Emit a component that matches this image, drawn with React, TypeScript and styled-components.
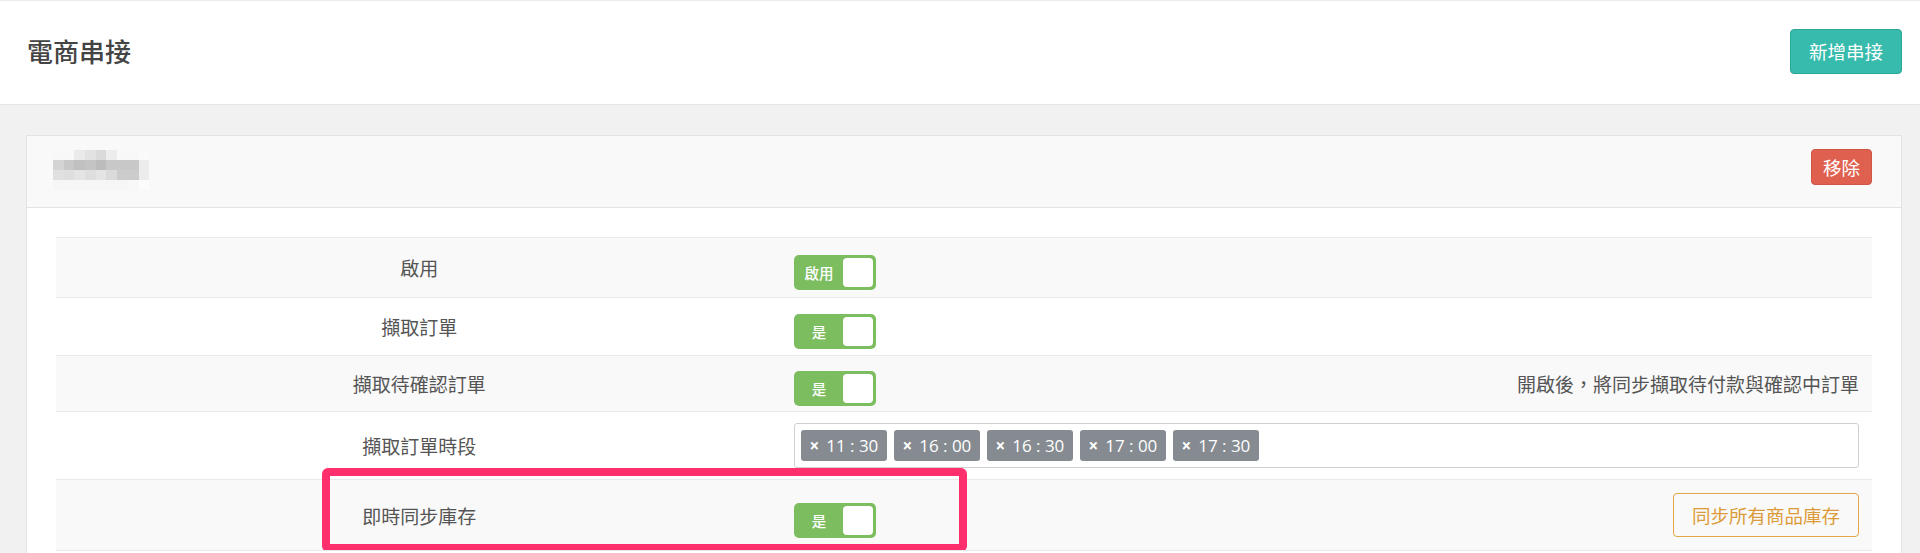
import styled, { createGlobalStyle } from 'styled-components';

const GlobalStyle = createGlobalStyle`
  html, body {
    margin: 0;
    padding: 0;
    background: #f1f1f1;
    font-family: "Noto Sans CJK TC", "Noto Sans", sans-serif;
    color: #555;
  }
  * { box-sizing: border-box; }
`;

const Page = styled.div`
  width: 1920px;
  height: 553px;
  overflow: hidden;
  background: #f1f1f1;
`;

const TopBar = styled.header`
  height: 105px;
  background: #fff;
  border-top: 1px solid #ebebeb;
  border-bottom: 1px solid #e6e6e6;
  display: flex;
  align-items: center;
  justify-content: space-between;
  padding: 0 18px 0 27px;
`;

const Title = styled.h1`
  margin: 0 0 3px;
  font-size: 26px;
  font-weight: 500;
  color: #444;
  line-height: 1;
`;

const Button = styled.button<{ $tone: 'teal' | 'red' | 'outline' }>`
  font-family: "Noto Sans CJK TC", sans-serif;
  font-size: 18.5px;
  line-height: 1;
  border-radius: 4px;
  cursor: pointer;
  ${({ $tone }) =>
    $tone === 'teal'
      ? `background:#36bbad;border:1px solid #2ea597;color:#fff;height:45px;padding:0 18px;margin-bottom:3px;`
      : $tone === 'red'
      ? `background:#e0604f;border:1px solid #cf5544;color:#fff;height:36px;padding:0 11px;`
      : `background:transparent;border:1px solid #e4a646;color:#dc9b38;height:44px;padding:0 18px;`}
`;

const Main = styled.main`
  padding: 30px 18px 0 26px;
`;

const Card = styled.section`
  background: #fff;
  border: 1px solid #e3e3e3;
  border-bottom: none;
`;

const CardHead = styled.div`
  height: 72px;
  background: #f9f9f9;
  border-bottom: 1px solid #e3e3e3;
  display: flex;
  align-items: flex-start;
  justify-content: space-between;
  padding: 13px 29px 0 26px;
`;

const Mosaic = styled.div`
  display: grid;
  grid-template-columns: repeat(9, 10.7px);
  grid-auto-rows: 10px;
  margin-top: 1px;
`;

const Pixel = styled.span<{ $g: number }>`
  background: ${({ $g }) => `rgb(${$g},${$g},${$g})`};
`;

const CardBody = styled.div`
  padding: 29px 29px 0;
`;

const Table = styled.div`
  display: flex;
  flex-direction: column;
`;

const Row = styled.div<{ $h: number; $odd: boolean }>`
  position: relative;
  height: ${({ $h }) => $h}px;
  display: grid;
  grid-template-columns: 40% 60%;
  border-top: 1px solid #e9e9e9;
  background: ${({ $odd }) => ($odd ? '#f9f9f9' : '#fff')};
`;

const LabelCell = styled.div`
  display: flex;
  align-items: center;
  justify-content: center;
  font-size: 19px;
  color: #555;
`;

const ValueCell = styled.div`
  display: flex;
  align-items: center;
  justify-content: space-between;
  padding: 0 13px 0 12px;
`;

const Note = styled.span`
  font-size: 19px;
  color: #555;
`;

const Switch = styled.div`
  width: 82px;
  height: 35px;
  margin-top: 10px;
  background: #7cbd5f;
  border-radius: 5px;
  display: flex;
  align-items: center;
  padding: 3px 3px 3px 0;
`;

const SwitchText = styled.span`
  flex: 1;
  text-align: center;
  color: #fff;
  font-size: 14.5px;
  font-weight: 500;
`;

const Knob = styled.span`
  width: 30px;
  height: 29px;
  background: #fff;
  border-radius: 4px;
`;

const TagBox = styled.div`
  flex: 1;
  height: 45px;
  border: 1px solid #cfcfcf;
  border-radius: 3px;
  background: #fff;
  display: flex;
  align-items: center;
  gap: 7px;
  padding: 0 6px;
`;

const Tag = styled.span`
  height: 31px;
  width: 86px;
  background: #858b91;
  color: #fff;
  border-radius: 3px;
  display: flex;
  align-items: center;
  justify-content: center;
  gap: 7px;
  font-family: "Open Sans", "Noto Sans", sans-serif;
  font-size: 17px;
  padding-right: 1px;
`;

const TagX = styled.span`
  font-weight: 700;
  font-size: 17px;
`;

const Highlight = styled.div`
  position: absolute;
  left: 266px;
  top: -12px;
  width: 645px;
  height: 84px;
  border: 8px solid #ff2e6c;
  border-radius: 6px;
  pointer-events: none;
`;

const mosaic = [
  [248, 248, 234, 226, 218, 236, 248, 248, 250],
  [212, 200, 192, 196, 188, 200, 200, 200, 236],
  [224, 222, 228, 222, 228, 218, 204, 204, 236],
  [246, 246, 246, 246, 246, 246, 246, 248, 252],
];

const times = ['11 : 30', '16 : 00', '16 : 30', '17 : 00', '17 : 30'];

const Toggle = ({ text }: { text: string }) => (
  <Switch>
    <SwitchText>{text}</SwitchText>
    <Knob />
  </Switch>
);

export default function App() {
  return (
    <Page>
      <GlobalStyle />
      <TopBar>
        <Title>電商串接</Title>
        <Button $tone="teal">新增串接</Button>
      </TopBar>
      <Main>
        <Card>
          <CardHead>
            <Mosaic>
              {mosaic.flat().map((g, i) => (
                <Pixel key={i} $g={g} />
              ))}
            </Mosaic>
            <Button $tone="red">移除</Button>
          </CardHead>
          <CardBody>
            <Table>
              <Row $h={60} $odd>
                <LabelCell>啟用</LabelCell>
                <ValueCell>
                  <Toggle text="啟用" />
                </ValueCell>
              </Row>
              <Row $h={58} $odd={false}>
                <LabelCell>擷取訂單</LabelCell>
                <ValueCell>
                  <Toggle text="是" />
                </ValueCell>
              </Row>
              <Row $h={56} $odd>
                <LabelCell>擷取待確認訂單</LabelCell>
                <ValueCell>
                  <Toggle text="是" />
                  <Note>開啟後，將同步擷取待付款與確認中訂單</Note>
                </ValueCell>
              </Row>
              <Row $h={68} $odd={false}>
                <LabelCell>擷取訂單時段</LabelCell>
                <ValueCell>
                  <TagBox>
                    {times.map((t) => (
                      <Tag key={t}>
                        <TagX>×</TagX>
                        {t}
                      </Tag>
                    ))}
                  </TagBox>
                </ValueCell>
              </Row>
              <Row $h={71} $odd>
                <LabelCell>即時同步庫存</LabelCell>
                <ValueCell>
                  <Toggle text="是" />
                  <Button $tone="outline">同步所有商品庫存</Button>
                </ValueCell>
                <Highlight />
              </Row>
              <Row $h={10} $odd={false} />
            </Table>
          </CardBody>
        </Card>
      </Main>
    </Page>
  );
}
